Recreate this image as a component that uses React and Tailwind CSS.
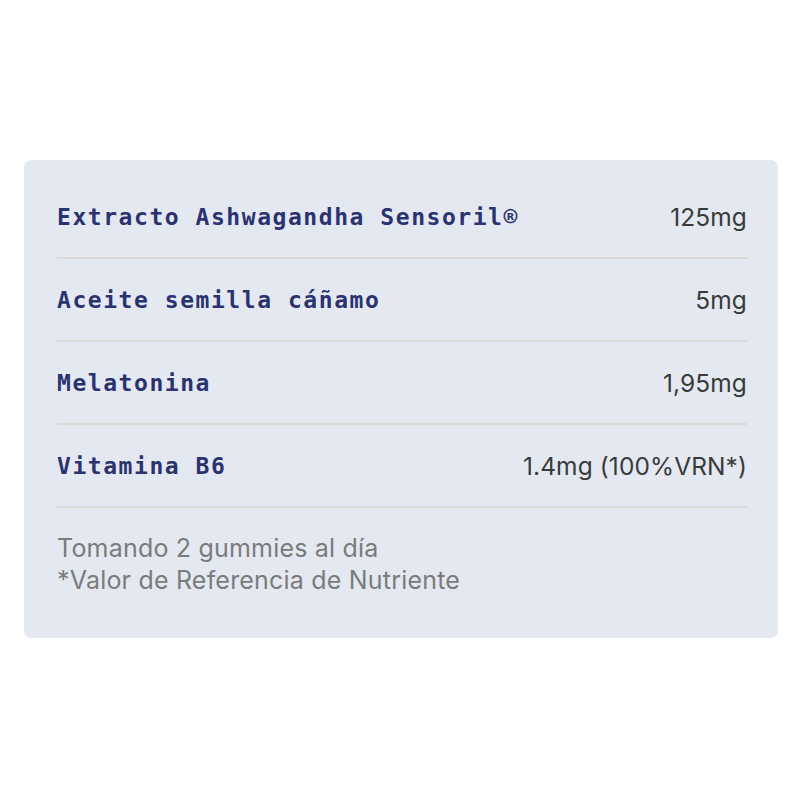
export default function App() {
  const rows = [
    ["Extracto Ashwagandha Sensoril®", "125mg"],
    ["Aceite semilla cáñamo", "5mg"],
    ["Melatonina", "1,95mg"],
    ["Vitamina B6", "1.4mg (100%VRN*)"],
  ];
  return (
    <div className="w-[800px] h-[800px] bg-white pt-[160px] pl-[24px]">
      <div className="w-[754px] h-[478px] rounded-[7px] bg-[#e4e9f1] pl-[33px] pr-[31px] pt-[16px]">
        {rows.map(([l, r]) => (
          <div key={l} className="h-[83px] flex items-center justify-between border-b-2 border-[#ddd9d6]">
            <span
              className="text-[23px] leading-[30px] font-bold text-[#2b3270] tracking-[1.55px]"
              style={{ fontFamily: '"DejaVu Sans Mono", monospace' }}
            >
              {l}
            </span>
            <span
              className="text-[24.5px] leading-[30px] text-[#3a3a3a] tracking-[0.1px]"
              style={{ fontFamily: 'Inter, sans-serif' }}
            >
              {r}
            </span>
          </div>
        ))}
        <div
          className="mt-[24px] text-[25px] leading-[32px] text-[#7b7b7b] tracking-[0.2px]"
          style={{ fontFamily: 'Inter, sans-serif' }}
        >
          <div>Tomando 2 gummies al día</div>
          <div>*Valor de Referencia de Nutriente</div>
        </div>
      </div>
    </div>
  );
}
